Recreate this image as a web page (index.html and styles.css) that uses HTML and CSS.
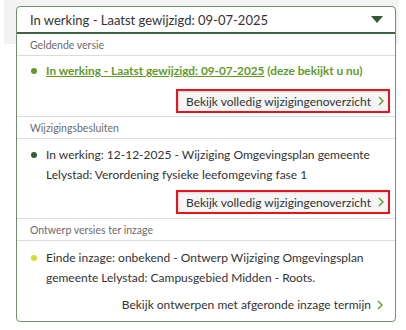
FILE: index.html
```html
<!DOCTYPE html>
<html lang="nl">
<head>
<meta charset="utf-8">
<link rel="stylesheet" href="styles.css">
</head>
<body>
<div class="page">
  <div class="panel">
    <div class="select">
      <span>In werking - Laatst gewijzigd: 09-07-2025</span>
      <svg class="caret" width="12" height="7" viewBox="0 0 12 7"><path d="M0 0H12L6 7Z" fill="#2f5a34"/></svg>
    </div>
    <div class="sec-head">Geldende versie</div>
    <div class="sec-body first">
      <div class="item current">
        <span class="dot dot-light"></span>
        <p><a class="cur-link">In werking - Laatst gewijzigd: 09-07-2025</a> (deze bekijkt u nu)</p>
      </div>
      <div class="action"><span class="btn">Bekijk volledig wijzigingenoverzicht <svg class="chev" width="6" height="10" viewBox="0 0 6 10"><path d="M1 1L5 5L1 9" fill="none" stroke="#5f9a2a" stroke-width="1.4"/></svg></span></div>
    </div>
    <div class="sec-head">Wijzigingsbesluiten</div>
    <div class="sec-body">
      <div class="item">
        <span class="dot dot-dark"></span>
        <p>In werking: 12-12-2025 - Wijziging Omgevingsplan gemeente Lelystad: Verordening fysieke leefomgeving fase 1</p>
      </div>
      <div class="action"><span class="btn">Bekijk volledig wijzigingenoverzicht <svg class="chev" width="6" height="10" viewBox="0 0 6 10"><path d="M1 1L5 5L1 9" fill="none" stroke="#5f9a2a" stroke-width="1.4"/></svg></span></div>
    </div>
    <div class="sec-head">Ontwerp versies ter inzage</div>
    <div class="sec-body last">
      <div class="item">
        <span class="dot dot-yellow"></span>
        <p>Einde inzage: onbekend - Ontwerp Wijziging Omgevingsplan gemeente Lelystad: Campusgebied Midden - Roots.</p>
      </div>
      <div class="action"><span class="plain">Bekijk ontwerpen met afgeronde inzage termijn <svg class="chev" width="6" height="10" viewBox="0 0 6 10"><path d="M1 1L5 5L1 9" fill="none" stroke="#5f9a2a" stroke-width="1.4"/></svg></span></div>
    </div>
  </div>
</div>
</body>
</html>
```
FILE: styles.css
```css
html, body { margin: 0; padding: 0; background: #fff; }
body { font-family: Lato, "Open Sans", sans-serif; color: #333; }
.page {
  margin-left: 4px;
  width: 395px;
  padding: 6px 0 0 12px;
  box-sizing: border-box;
  background: linear-gradient(#f3f3f3 44px, #fff 44px);
  height: 330px;
}
.panel {
  width: 380px;
  border: 1px solid #6f8f70;
  border-radius: 4px;
  background: #fff;
  box-sizing: border-box;
  overflow: hidden;
}
.select {
  height: 27px;
  border-bottom: 2px solid #3e6343;
  display: flex;
  align-items: center;
  justify-content: space-between;
  padding: 0 12px 0 13px;
  font-size: 13px;
  box-sizing: border-box;
}
.caret { display: block; }
.sec-head {
  height: 21px;
  display: flex;
  align-items: center;
  padding-left: 13px;
  font-size: 10.5px;
  color: #6b6b6b;
  border-bottom: 1px solid #dcdcdc;
}
.sec-body {
  display: flex;
  flex-direction: column;
  gap: 5px;
  border-bottom: 1px solid #dcdcdc;
  padding: 6px 5px 4px 13px;
}
.sec-body.first { padding-top: 5px; padding-bottom: 3px; gap: 8px; }
.sec-body.last { border-bottom: none; padding-top: 7px; padding-bottom: 6px; gap: 7px; }
.item { display: flex; gap: 9px; align-items: flex-start; }
.item p { margin: 0; font-size: 12px; line-height: 20px; }
.dot { width: 6px; height: 6px; border-radius: 50%; margin-top: 7px; flex: none; margin-left: 1px; }
.dot-light { background: #5e9a28; }
.dot-dark { background: #2e6234; }
.dot-yellow { background: #d2dc2a; }
.current p { font-weight: 700; color: #5f9a2a; font-size: 11.8px; }
.cur-link { text-decoration: underline; }
.action { display: flex; justify-content: flex-end; }
.btn {
  display: flex; align-items: center; gap: 7px;
  border: 2px solid #e8141c;
  background: #f5f5f5;
  box-shadow: inset 1px 1px 2px rgba(0,0,0,0.12);
  padding: 0 4px 0 8px;
  font-size: 12px;
  height: 24px; box-sizing: border-box;
}
.plain { display: flex; align-items: center; gap: 6px; font-size: 12px; line-height: 20px; padding-right: 7px; }
.chev { display: block; }
```
